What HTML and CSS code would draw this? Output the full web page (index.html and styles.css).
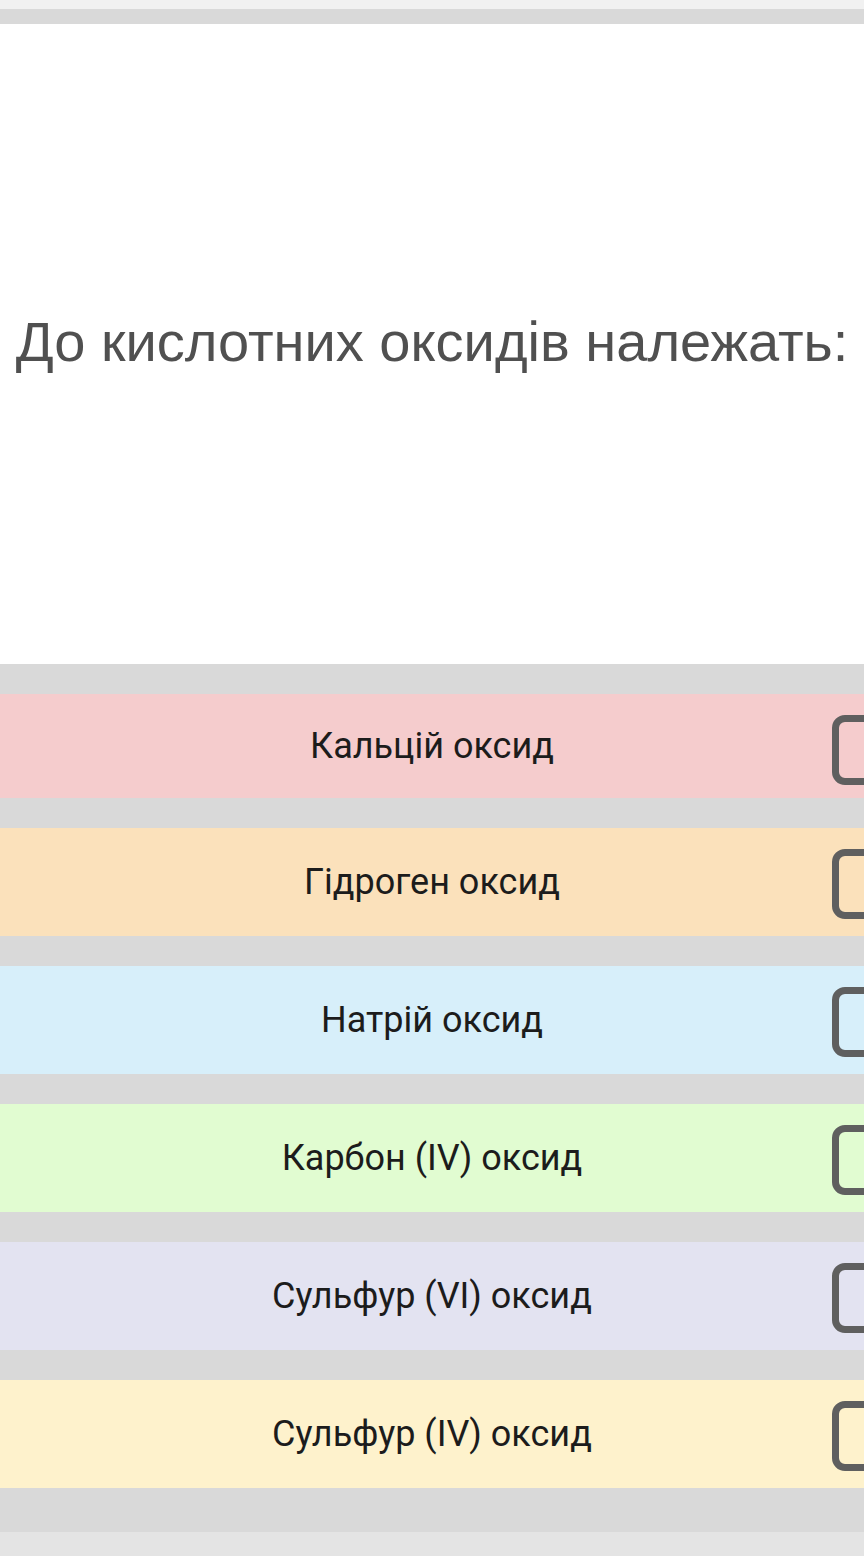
FILE: index.html
```html
<!DOCTYPE html>
<html lang="uk">
<head>
    <meta charset="UTF-8">
    <meta name="viewport" content="width=device-width, initial-scale=1.0">
    <title>Тест</title>
    <link rel="stylesheet" href="styles.css">
</head>
<body>
    <div class="top-strip"></div>
    <div class="top-bar"></div>

    <div class="question">
        <h2>До кислотних оксидів належать:</h2>
    </div>

    <div class="answers">
        <div class="option pink">
            <span>Кальцій оксид</span>
            <span class="box"></span>
        </div>
        <div class="option orange">
            <span>Гідроген оксид</span>
            <span class="box"></span>
        </div>
        <div class="option blue">
            <span>Натрій оксид</span>
            <span class="box"></span>
        </div>
        <div class="option green">
            <span>Карбон (IV) оксид</span>
            <span class="box"></span>
        </div>
        <div class="option lilac">
            <span>Сульфур (VI) оксид</span>
            <span class="box"></span>
        </div>
        <div class="option yellow">
            <span>Сульфур (IV) оксид</span>
            <span class="box"></span>
        </div>
    </div>

    <div class="bottom-strip"></div>
</body>
</html>
```

FILE: styles.css
```css
body {
    margin: 0;
    width: 864px;
    overflow: hidden;
    background: white;
    font-family: 'Liberation Sans', Arial, sans-serif;
}
.top-strip {
    height: 9px;
    background: #f1f1f1;
}
.top-bar {
    height: 15px;
    background: #d9d9d9;
}
.question {
    height: 640px;
    display: flex;
    align-items: center;
    justify-content: center;
}
.question h2 {
    margin: 0 0 6px;
    font-weight: normal;
    font-size: 56px;
    color: #505050;
    white-space: nowrap;
}
.answers {
    background: #d9d9d9;
    padding: 30px 0 44px;
    display: flex;
    flex-direction: column;
    gap: 30px;
}
.option {
    position: relative;
    height: 108px;
    display: flex;
    align-items: center;
    justify-content: center;
    font-family: Roboto, 'Noto Sans', sans-serif;
    font-size: 36px;
    color: #1c1c1c;
}
.option:first-child {
    height: 104px;
}
.option .box {
    position: absolute;
    left: 832px;
    top: 50%;
    width: 56px;
    height: 56px;
    margin-top: -33px;
    border: 7px solid #5f5f5f;
    border-radius: 13px;
}
.option:first-child .box {
    margin-top: -31px;
}
.pink { background: #f5cccd; }
.orange { background: #fbe1bb; }
.blue { background: #d7effa; }
.green { background: #e1fcd1; }
.lilac { background: #e3e3f1; }
.yellow { background: #fef2cc; }
.bottom-strip {
    height: 24px;
    background: #e4e4e4;
}
```
